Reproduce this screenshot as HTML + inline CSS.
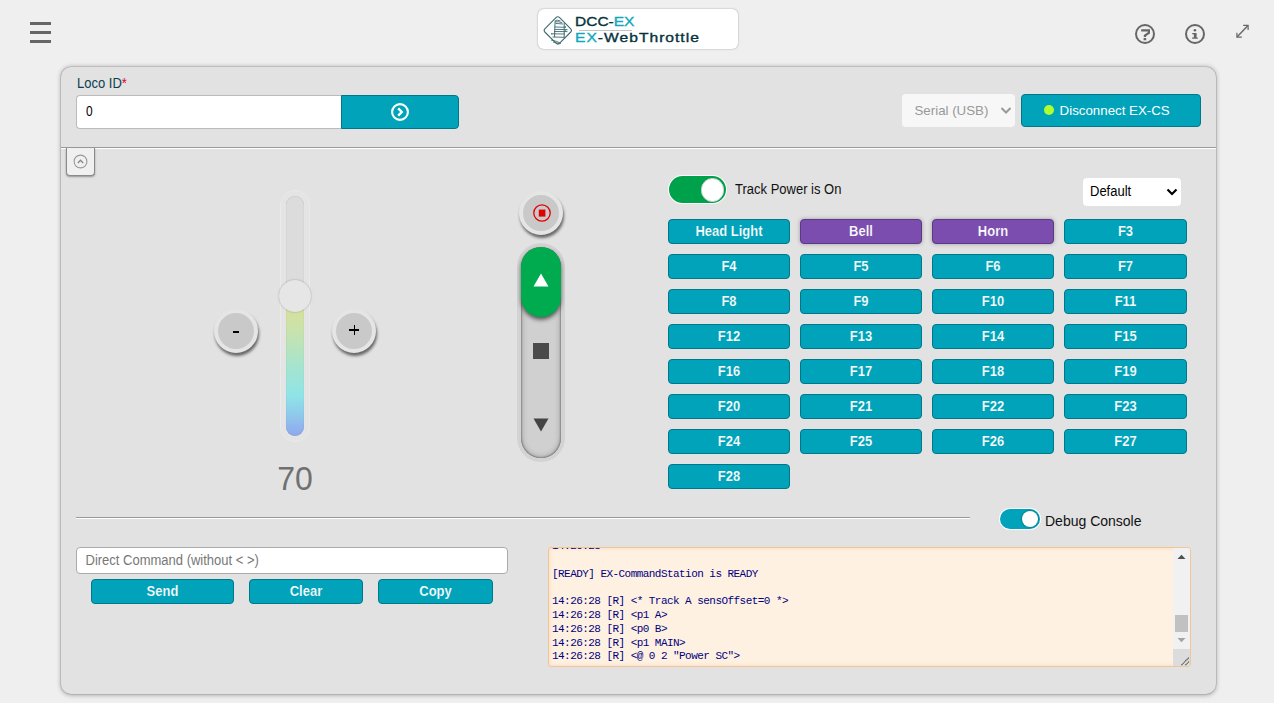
<!DOCTYPE html>
<html><head><meta charset="utf-8">
<style>
*{box-sizing:border-box;margin:0;padding:0}
html,body{width:1274px;height:703px;overflow:hidden;background:#efefef;font-family:"Liberation Sans",sans-serif;position:relative}
.a{position:absolute}
.bar{position:absolute;left:30px;width:21px;height:3px;background:#666}
.logo{left:538px;top:8.5px;width:200px;height:40.5px;background:#fff;border-radius:6px;box-shadow:0 0 2px rgba(0,0,0,.35)}
.card{left:61px;top:67px;width:1155px;height:627px;background:#e2e2e2;border-radius:10px;box-shadow:0 0 0 .6px rgba(0,0,0,.16),0 .5px 5px rgba(0,0,0,.33)}
.hr{position:absolute;height:2px;border-top:1px solid #999;border-bottom:1px solid #fff}
.btn{position:absolute;background:#00a3b9;border:1px solid #00788a;border-radius:4px;color:#fff;font-weight:bold;font-size:13px;text-align:center}
.fn{width:122px;height:25px;line-height:23px}
.pur{background:#7a4daf;border-color:#5c3a86;box-shadow:0 0 4px rgba(0,0,0,.3)}
.rb{position:absolute;border-radius:50%;background:#c9c9c9;border:4px solid #e5e5e5;box-shadow:1px 3px 3px rgba(0,0,0,.55)}
.t{transform:scaleY(1.08);transform-origin:0 12.3px}
.bt{display:inline-block;transform:scaleY(1.1);transform-origin:0 15.8px;-webkit-text-stroke:.18px #00a3b9}
.pur .bt{-webkit-text-stroke-color:#7a4daf}
.con{font-family:"Liberation Mono",monospace;font-size:11px;letter-spacing:-0.55px;color:#000080;line-height:13.8px;white-space:pre}
</style></head><body>
<!-- hamburger -->
<div class="bar" style="top:22px"></div>
<div class="bar" style="top:31px"></div>
<div class="bar" style="top:40px"></div>

<!-- logo -->
<div class="a logo">
  <svg class="a" style="left:5px;top:7px" width="29" height="29" viewBox="0 0 29 29">
    <rect x="4.5" y="4.1" width="20.6" height="20.6" rx="2.6" transform="rotate(45 14.8 14.4)" fill="none" stroke="#3d6b70" stroke-width="1.1"/>
    <path d="M12.5 4.5 q1 -1 5 0.5 M12.3 5.8 q3 -0.6 7 1 M12.5 7.4 L20 8 M11.8 11 L23 11.3 M12 13.4 L24.5 13.6 M11 15.5 L24.5 15.6 M8.5 17.8 L22 18 M9.5 21 L21 21.3 M8 24 Q14 25 18 27.5 M10 26 Q14 26.5 16.5 28" fill="none" stroke="#3d6b70" stroke-width=".9"/>
    <path d="M12.2 4.5 Q11.6 12 11.6 21 M21.2 7 V22" fill="none" stroke="#3d6b70" stroke-width="1"/>
    <path d="M9 17 q-1.2 1 0 1.8 M22 10 q1.3 0.6 0 1.6 M22.3 14 q1.3 .8 0 1.8" fill="none" stroke="#3d6b70" stroke-width=".8"/>
  </svg>
  <div class="a" style="left:37px;top:6px;font-size:12.5px;line-height:15px;color:#06323b;-webkit-text-stroke:.35px currentColor;white-space:nowrap;transform-origin:0 0;transform:scaleX(1.24)">DCC-<span style="color:#12a7bd">EX</span></div>
  <div class="a" style="left:40.5px;top:21px;width:53px;height:1px;background:#c4c4c4"></div>
  <div class="a" style="left:37px;top:22.4px;font-size:12.5px;line-height:15px;color:#06323b;letter-spacing:.8px;-webkit-text-stroke:.35px currentColor;white-space:nowrap;transform-origin:0 0;transform:scaleX(1.25)"><span style="color:#12a7bd">EX</span>-WebThrottle</div>
</div>

<!-- top right icons -->
<svg class="a" style="left:1134px;top:23px" width="22" height="22" viewBox="0 0 22 22">
  <circle cx="11" cy="11" r="9" fill="none" stroke="#666" stroke-width="2"/>
  <path d="M7.2 6.2 H16 V10.6 L12.1 13.1 V14 H9.8 V11.9 L13.8 9.3 V8.5 H7.2 Z" fill="#666"/>
  <rect x="9.6" y="15" width="2.6" height="2.3" fill="#666"/>
</svg>
<svg class="a" style="left:1184px;top:23px" width="22" height="22" viewBox="0 0 22 22">
  <circle cx="11" cy="11" r="9" fill="none" stroke="#666" stroke-width="2"/>
  <circle cx="10.9" cy="7.3" r="1.3" fill="#666"/>
  <path d="M8.2 10.1 H12.6 V14.4 H13.8 V15.7 H8.1 V14.4 H9.8 V11.3 H8.2 Z" fill="#666"/>
</svg>
<svg class="a" style="left:1234px;top:23px" width="16" height="17" viewBox="0 0 16 17">
  <path d="M3.2 13.7 L13.8 2.7" stroke="#666" stroke-width="1.4"/>
  <path d="M9.2 2.4 H14.1 V7" fill="none" stroke="#666" stroke-width="1.2"/>
  <path d="M2.9 9.8 V14.1 H7.8" fill="none" stroke="#666" stroke-width="1.2"/>
</svg>

<!-- card -->
<div class="a card"></div>

<!-- loco id -->
<div class="a t" style="left:77px;top:75.5px;font-size:13px;line-height:16px;color:#0c3e4f">Loco ID<span style="color:#e0002a">*</span></div>
<div class="a" style="left:76px;top:95px;width:266px;height:34px;background:#fff;border:1px solid #bbb;border-right:none;border-radius:4px 0 0 4px"></div>
<div class="a" style="left:86px;top:104px;font-size:13px;line-height:16px;color:#000;transform:scale(.92,1.08);transform-origin:0 50%">0</div>
<div class="btn" style="left:341px;top:95px;width:118px;height:34px;border-radius:0 4px 4px 0">
  <svg class="a" style="left:48.3px;top:5.6px" width="20" height="20" viewBox="0 0 20 20">
    <circle cx="10" cy="10" r="7.9" fill="none" stroke="#fff" stroke-width="2.1"/>
    <path d="M8.2 6.4 L11.7 10 L8.2 13.6" fill="none" stroke="#fff" stroke-width="2.4"/>
  </svg>
</div>

<!-- serial select -->
<div class="a" style="left:902px;top:94px;width:113px;height:33px;background:#f7f7f7;border-radius:4px"></div>
<div class="a" style="left:914.5px;top:103px;font-size:13.3px;line-height:16px;color:#999">Serial (USB)</div>
<svg class="a" style="left:1000px;top:106px" width="12" height="9" viewBox="0 0 12 9"><path d="M1.5 2 L6 6.5 L10.5 2" fill="none" stroke="#999" stroke-width="2"/></svg>
<div class="btn" style="left:1021px;top:94px;width:180px;height:33px;font-weight:normal;font-size:13.3px;line-height:31px;text-align:left;padding-left:37.6px">Disconnect EX-CS</div>
<div class="a" style="left:1044px;top:105px;width:10px;height:10px;border-radius:50%;background:#adff2f"></div>

<!-- top hr -->
<div class="hr" style="left:61px;top:147px;width:1155px"></div>
<!-- collapse btn -->
<div class="a" style="left:66px;top:148px;width:29px;height:28px;background:#f0f0f0;border:1px solid #8a8a8a;border-top:none;border-radius:0 0 4px 4px;box-shadow:0 1px 2px rgba(0,0,0,.35)">
  <svg class="a" style="left:6px;top:5.5px" width="15" height="15" viewBox="0 0 15 15">
    <circle cx="7.5" cy="7.5" r="6.4" fill="none" stroke="#999" stroke-width="1.1"/>
    <path d="M4.8 9 L7.5 6.3 L10.2 9" fill="none" stroke="#8a8a8a" stroke-width="1.4"/>
  </svg>
</div>

<!-- throttle slider -->
<div class="a" style="left:280px;top:190px;width:30px;height:252px;border-radius:15px;background:#e4e4e4;border:1px solid #eaeaea"></div>
<div class="a" style="left:286px;top:196px;width:18px;height:240px;border-radius:9px;background:linear-gradient(to bottom,#dcdcdc 0,#dcdcdc 100px,#d8e09c 104px,#cde2a8 130px,#a8e4cc 168px,#8fe4e8 200px,#90c4ec 222px,#8fa6ef 240px);box-shadow:inset 0 0 1px rgba(0,0,0,.25)"></div>
<div class="a" style="left:279px;top:280px;width:32px;height:32px;border-radius:50%;background:#e6e6e6;box-shadow:0 0 2px rgba(0,0,0,.3)"></div>
<div class="a" style="left:255px;top:461px;width:80px;text-align:center;font-size:32px;line-height:36px;color:#707070;transform:scaleY(1.05);transform-origin:0 28.6px">70</div>

<div class="rb" style="left:214px;top:309px;width:44px;height:44px"></div>
<div class="a" style="left:233.3px;top:331.2px;width:5.4px;height:1.6px;background:#000"></div>
<div class="rb" style="left:332px;top:309px;width:44px;height:44px"></div>
<div class="a" style="left:349px;top:329.4px;width:10.2px;height:1.3px;background:#000"></div><div class="a" style="left:353.5px;top:324.8px;width:1.3px;height:10.3px;background:#000"></div>

<!-- direction -->
<div class="rb" style="left:519px;top:191px;width:44px;height:44px"></div>
<svg class="a" style="left:531.5px;top:203px" width="20" height="20" viewBox="0 0 20 20">
  <circle cx="10" cy="10" r="8.2" fill="none" stroke="#e00000" stroke-width="1.3"/>
  <rect x="6.8" y="6.6" width="6.6" height="7" fill="#e00000"/>
</svg>
<div class="a" style="left:517px;top:243px;width:48px;height:219px;border-radius:24px;background:#d3d3d3"></div>
<div class="a" style="left:521px;top:247px;width:40px;height:211px;border-radius:20px;background:#d0d0d0;box-shadow:inset 0 0 2px #333,inset 0 0 6px rgba(0,0,0,.3)"></div>
<div class="a" style="left:521px;top:247px;width:40px;height:70px;border-radius:20px;background:#00aa4e;box-shadow:0 2.5px 4px rgba(0,0,0,.6)"></div>
<svg class="a" style="left:533px;top:273px" width="16" height="14" viewBox="0 0 16 14"><path d="M8 0.5 L15.5 13.5 H0.5 Z" fill="#fff"/></svg>
<div class="a" style="left:533px;top:343px;width:16px;height:16px;background:#4a4a4a"></div>
<svg class="a" style="left:533px;top:418px" width="16" height="14" viewBox="0 0 16 14"><path d="M0.5 0.5 H15.5 L8 13.5 Z" fill="#444"/></svg>

<!-- track power -->
<div class="a" style="left:669px;top:175.5px;width:57px;height:27.5px;border-radius:14px;background:#00a14b;box-shadow:0 0 0 1px #fff"></div>
<div class="a" style="left:700.5px;top:178px;width:23.5px;height:23.5px;border-radius:50%;background:#fff;border:1.5px solid #d3d3d3"></div>
<div class="a t" style="left:735px;top:182px;font-size:13px;line-height:16px;color:#111">Track Power is On</div>
<div class="a" style="left:1083px;top:178px;width:98px;height:28px;background:#fff;border-radius:4px"></div>
<div class="a t" style="left:1090px;top:184px;font-size:13px;line-height:16px;color:#000">Default</div>
<svg class="a" style="left:1166px;top:187px" width="12" height="10" viewBox="0 0 12 10"><path d="M1.5 2.5 L6 7 L10.5 2.5" fill="none" stroke="#000" stroke-width="2.2"/></svg>

<!-- functions -->
<div class="btn fn" style="left:668px;top:219px"><span class="bt">Head Light</span></div>
<div class="btn fn pur" style="left:800px;top:219px"><span class="bt">Bell</span></div>
<div class="btn fn pur" style="left:932px;top:219px"><span class="bt">Horn</span></div>
<div class="btn fn" style="left:1064px;top:219px;width:123px"><span class="bt">F3</span></div>
<div class="btn fn" style="left:668px;top:254px"><span class="bt">F4</span></div>
<div class="btn fn" style="left:800px;top:254px"><span class="bt">F5</span></div>
<div class="btn fn" style="left:932px;top:254px"><span class="bt">F6</span></div>
<div class="btn fn" style="left:1064px;top:254px;width:123px"><span class="bt">F7</span></div>
<div class="btn fn" style="left:668px;top:289px"><span class="bt">F8</span></div>
<div class="btn fn" style="left:800px;top:289px"><span class="bt">F9</span></div>
<div class="btn fn" style="left:932px;top:289px"><span class="bt">F10</span></div>
<div class="btn fn" style="left:1064px;top:289px;width:123px"><span class="bt">F11</span></div>
<div class="btn fn" style="left:668px;top:324px"><span class="bt">F12</span></div>
<div class="btn fn" style="left:800px;top:324px"><span class="bt">F13</span></div>
<div class="btn fn" style="left:932px;top:324px"><span class="bt">F14</span></div>
<div class="btn fn" style="left:1064px;top:324px;width:123px"><span class="bt">F15</span></div>
<div class="btn fn" style="left:668px;top:359px"><span class="bt">F16</span></div>
<div class="btn fn" style="left:800px;top:359px"><span class="bt">F17</span></div>
<div class="btn fn" style="left:932px;top:359px"><span class="bt">F18</span></div>
<div class="btn fn" style="left:1064px;top:359px;width:123px"><span class="bt">F19</span></div>
<div class="btn fn" style="left:668px;top:394px"><span class="bt">F20</span></div>
<div class="btn fn" style="left:800px;top:394px"><span class="bt">F21</span></div>
<div class="btn fn" style="left:932px;top:394px"><span class="bt">F22</span></div>
<div class="btn fn" style="left:1064px;top:394px;width:123px"><span class="bt">F23</span></div>
<div class="btn fn" style="left:668px;top:429px"><span class="bt">F24</span></div>
<div class="btn fn" style="left:800px;top:429px"><span class="bt">F25</span></div>
<div class="btn fn" style="left:932px;top:429px"><span class="bt">F26</span></div>
<div class="btn fn" style="left:1064px;top:429px;width:123px"><span class="bt">F27</span></div>
<div class="btn fn" style="left:668px;top:464px"><span class="bt">F28</span></div>

<!-- bottom -->
<div class="hr" style="left:76px;top:517px;width:894px"></div>
<div class="a" style="left:1000px;top:509px;width:40px;height:20px;border-radius:10px;background:#00a3b9;box-shadow:0 0 0 1px #fff"></div>
<div class="a" style="left:1021.5px;top:510.8px;width:16.3px;height:16.3px;border-radius:50%;background:#fff;box-shadow:0 0 1.5px 1px rgba(0,0,0,.22)"></div>
<div class="a" style="left:1045px;top:513px;font-size:14px;line-height:17px;color:#111">Debug Console</div>

<div class="a" style="left:76px;top:547px;width:432px;height:27px;background:#fff;border:1px solid #aaa;border-radius:4px"></div>
<div class="a t" style="left:85.5px;top:553px;font-size:13px;line-height:16px;color:#777">Direct Command (without &lt; &gt;)</div>
<div class="btn" style="left:91px;top:579px;width:143px;height:25px;line-height:23px"><span class="bt">Send</span></div>
<div class="btn" style="left:249px;top:579px;width:114px;height:25px;line-height:23px"><span class="bt">Clear</span></div>
<div class="btn" style="left:378px;top:579px;width:115px;height:25px;line-height:23px"><span class="bt">Copy</span></div>

<!-- console -->
<div class="a" style="left:548px;top:547px;width:643px;height:120px;background:#fef1e1;border:1px solid #f0c59a;border-radius:3px;overflow:hidden;box-shadow:inset 0 0 4px rgba(230,170,110,.35)">
  <div class="a con" style="left:3px;top:-8px">14:26:28

[READY] EX-CommandStation is READY

14:26:28 [R] &lt;* Track A sensOffset=0 *&gt;
14:26:28 [R] &lt;p1 A&gt;
14:26:28 [R] &lt;p0 B&gt;
14:26:28 [R] &lt;p1 MAIN&gt;
14:26:28 [R] &lt;@ 0 2 "Power SC"&gt;</div>
  <div class="a" style="left:624px;top:0;width:17px;height:101px;background:#f1f1f1"></div>
  <svg class="a" style="left:628px;top:6px" width="9" height="6" viewBox="0 0 9 6"><path d="M0.5 5 L4.5 0.8 L8.5 5 Z" fill="#505050"/></svg>
  <div class="a" style="left:626px;top:67px;width:13px;height:17px;background:#c1c1c1"></div>
  <svg class="a" style="left:628px;top:89px" width="9" height="6" viewBox="0 0 9 6"><path d="M0.5 1 H8.5 L4.5 5.2 Z" fill="#a3a3a3"/></svg>
  <div class="a" style="left:624px;top:101px;width:17px;height:17px;background:#dcdcdc"></div>
  <svg class="a" style="left:624px;top:101px" width="17" height="17" viewBox="0 0 17 17"><path d="M8.5 16 L16 8.5 M12.5 16 L16 12.5" stroke="#444" stroke-width="1.1" stroke-dasharray="1.3 .5"/></svg>
</div>
</body></html>
